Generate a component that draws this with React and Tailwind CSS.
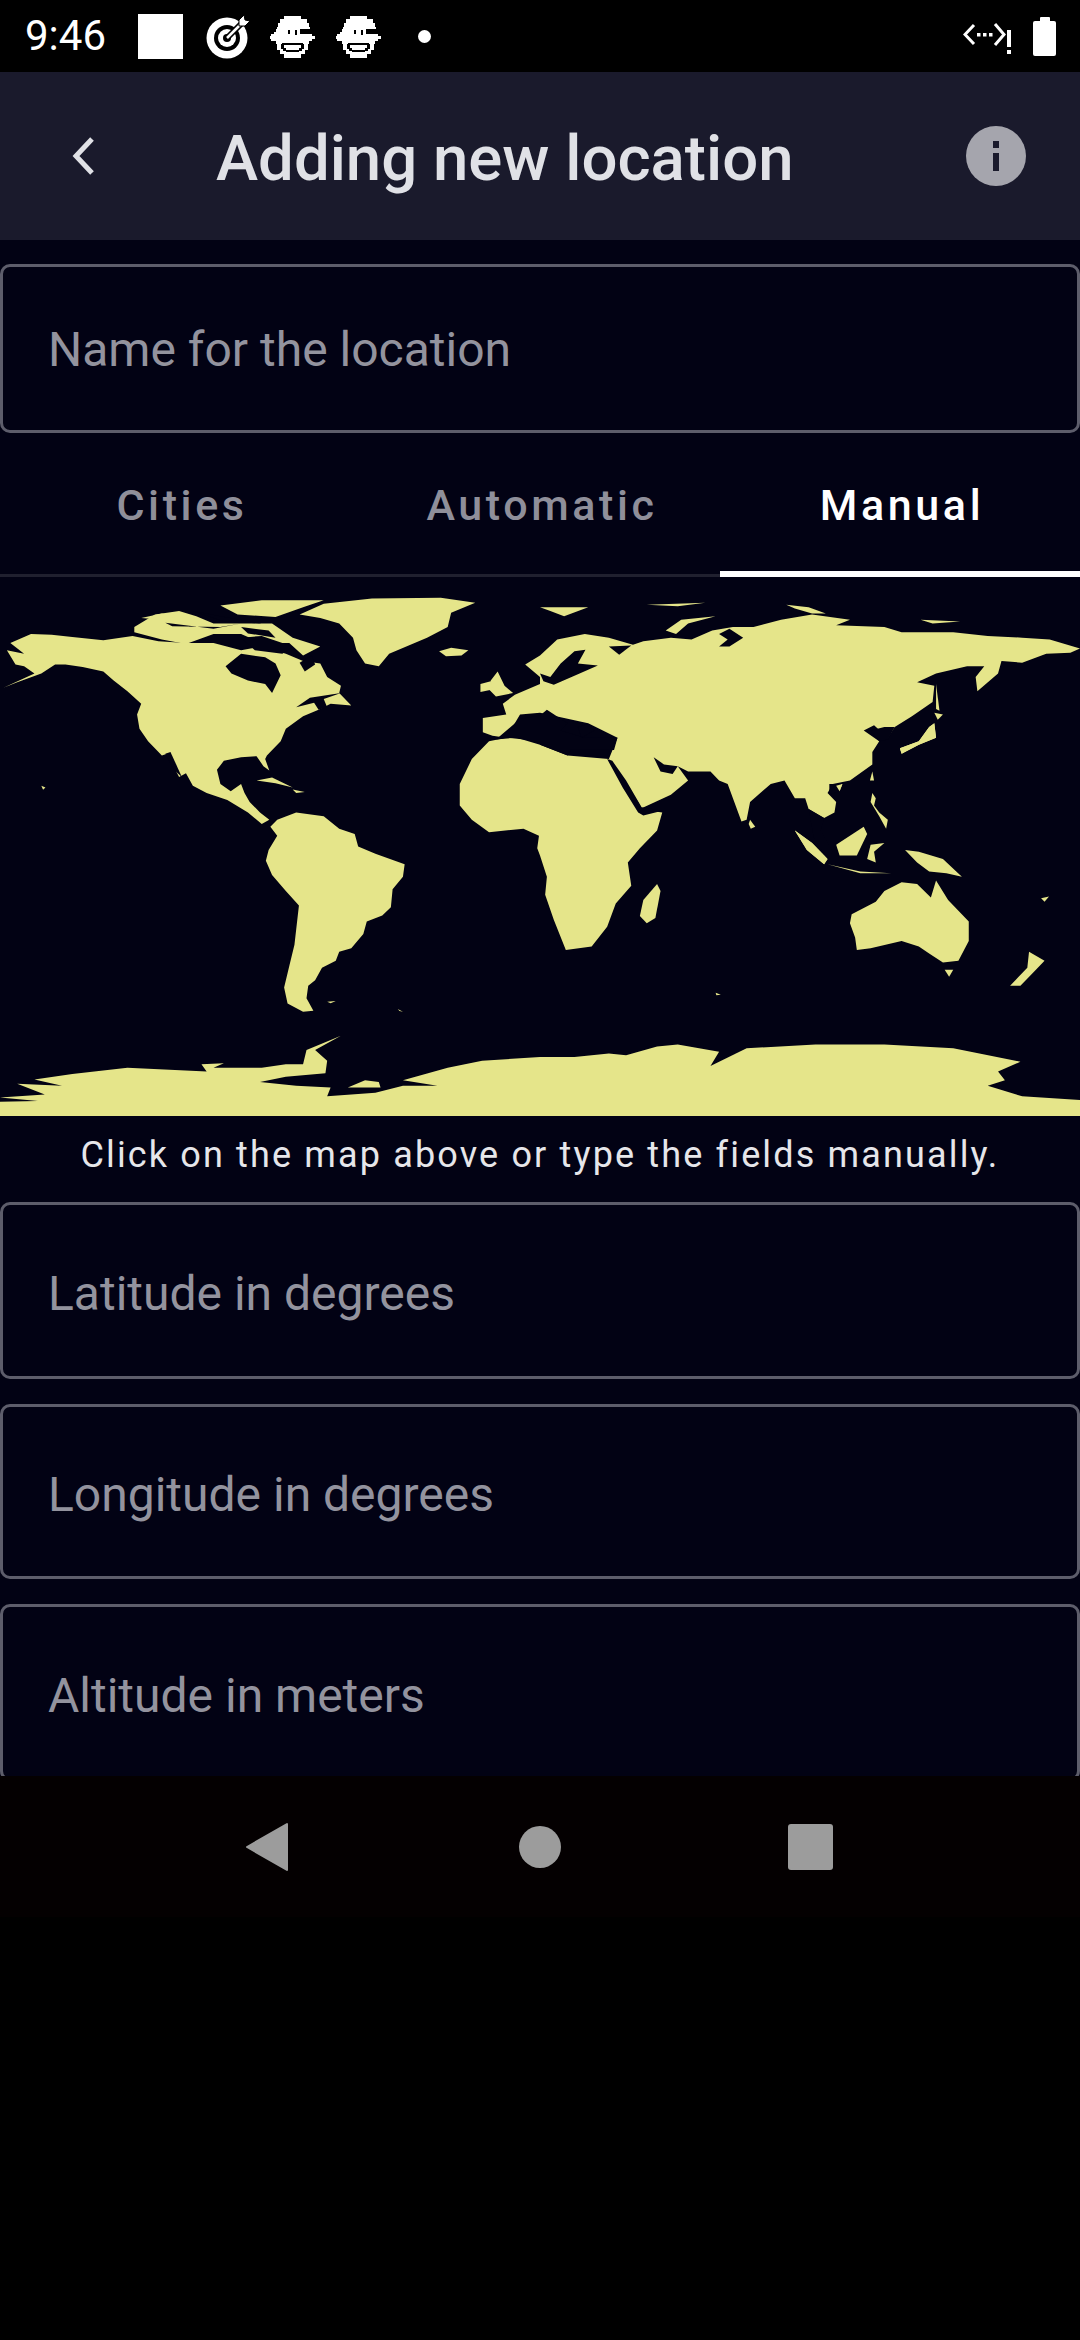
import React from "react";

const LAND = [
  // North America
  "30,205 90,180 150,182 210,188 300,197 385,185 460,200 540,205 620,205 700,225 760,215 830,235 880,255 930,262 950,300 990,325 985,345 1020,380 960,375 925,392 880,410 830,445 815,480 775,520 770,530 782,562 765,550 745,522 700,525 650,535 630,560 640,600 670,620 700,600 710,625 725,650 755,680 782,700 760,712 720,680 660,645 600,625 560,605 540,570 520,580 485,515 470,520 430,480 405,445 398,405 410,375 370,340 330,310 300,285 240,272 190,265 160,265 120,290 50,315 10,330 100,290 70,270 45,265 20,225 70,235",
  // Arctic islands
  "390,160 450,125 520,115 570,130 620,150 700,150 790,150 850,190 930,215 880,240 840,205 760,205 700,180 620,180 540,208 470,195 390,175",
  "640,100 760,85 940,85 880,105 800,132 690,125",
  "410,135 470,122 520,130 470,140",
  // Greenland, Iceland
  "870,125 940,95 1080,80 1280,78 1380,92 1310,120 1300,160 1240,190 1130,235 1100,270 1060,262 1035,225 1025,190 985,150 930,135",
  "1275,228 1310,218 1360,225 1340,240 1295,242",
  // South America
  "785,720 805,700 860,680 940,690 985,725 1030,740 1040,775 1090,795 1175,825 1170,860 1140,895 1135,945 1110,968 1065,985 1055,1020 1020,1060 985,1070 975,1095 935,1115 915,1150 895,1165 890,1200 910,1235 880,1238 835,1215 825,1170 840,1110 855,1050 868,940 830,900 790,855 772,815 780,785 805,745",
  // Caribbean
  "745,590 790,582 850,610 800,598",
  "850,615 885,622 860,625",
  // Africa
  "1335,600 1370,530 1420,480 1470,470 1568,480 | 0,490 80,520 200,530 240,590 285,670 355,680 340,730 290,780 255,820 265,885 220,935 195,1000 150,1055 75,1065 40,980 15,910 20,860 0,800 | 1560,780 1565,745 1520,725 1420,735 1370,700 1335,660",
  // Eurasia
  "1525,265 1568,240 | 50,195 130,180 200,190 270,210 300,200 380,190 440,195 500,170 560,160 620,160 700,140 790,125 900,140 860,155 1000,160 1050,175 1200,175 1300,185 1400,190 1480,195 1568,220 1540,232 1470,235 1400,260 1340,255 1330,290 1270,340 1265,300 1290,270 1240,270 1150,290 1095,315 1145,325 1140,370 1080,410 1030,440 1010,470 970,435 940,450 985,480 965,510 965,545 900,590 850,600 835,625 860,650 855,680 825,695 780,670 770,640 740,640 710,590 670,600 610,650 600,700 585,705 545,600 520,590 495,565 430,565 400,550 430,590 380,630 295,668 285,650 240,585 200,530 225,470 140,430 0,400 | 1510,405 1470,470 1430,465 1402,455 1402,415 1470,405 1460,375 1495,350 1568,320 1568,300",
  // UK, Ireland
  "1425,310 1445,285 1465,325 1490,345 1440,355 1420,335",
  "1395,320 1425,312 1430,335 1395,342",
  // Arctic Eurasia
  "| 0,105 140,105 70,130 30,115",
  "| 365,170 410,140 510,130 430,150 395,180",
  "| 310,98 480,92 400,102",
  "| 715,98 780,105 830,122 790,122 740,108",
  "| 1105,140 1220,145 1140,150",
  // SE Asia
  "| 740,730 790,765 835,810 825,825 775,785",
  "| 835,825 930,845 1020,850 930,850",
  "| 860,770 940,720 950,740 920,800 870,800",
  "| 960,770 1000,765 970,790 975,820 950,810",
  "| 965,625 975,640 970,660 985,680 1010,700 1005,725 985,690 960,650",
  "| 1060,785 1100,790 1170,810 1225,860 1180,850 1130,845 1095,820",
  "| 1045,500 1100,480 1130,440 1145,430 1150,470 1100,490 1050,515",
  "| 1145,400 1170,405 1155,420",
  "| 1150,320 1160,395 1150,390",
  "| 860,605 878,600 870,620",
  "| 965,565 970,590 958,590",
  "| 610,700 625,720 612,725 606,712",
  // Madagascar, Australia, Tasmania, NZ
  "| 340,880 350,900 335,975 310,990 290,970 300,925",
  "| 905,965 975,930 1000,900 1050,875 1095,880 1135,918 1150,870 1185,925 1245,985 1245,1040 1215,1095 1170,1100 1130,1075 1100,1055 1050,1040 960,1060 920,1065 915,1030 900,990",
  "| 1175,1120 1200,1120 1188,1140",
  "| 1420,1070 1465,1095 1440,1120 1395,1165 1365,1165 1415,1115",
  // Antarctica
  "0,1530 0,1490 110,1488 0,1478 130,1470 50,1440 180,1445 100,1428 210,1412 370,1395 600,1405 585,1385 650,1382 620,1395 760,1395 830,1385 880,1385 890,1345 990,1305 915,1345 950,1375 945,1410 830,1420 755,1435 860,1445 960,1450 950,1475 1090,1465 1170,1445 1270,1445 1170,1430 1300,1395 1400,1375 1568,1365 | 100,1365 200,1355 250,1360 340,1335 400,1330 520,1350 495,1390 600,1340 800,1330 1000,1330 1200,1340 1395,1378 1330,1405 1350,1430 1300,1445 1400,1475 1568,1485 1568,1530 | 1568,1530",
  "1010,1450 1060,1430 1100,1435 1105,1450",
  // Small islands
  "120,605 132,610 125,616",
  "950,1210 975,1208 960,1214",
  "1155,1230 1170,1238 1160,1236",
  "| 1455,920 1478,915 1465,930",
  "| 510,1185 525,1190 512,1192",
];

const SEA = [
  // Hudson Bay
  "655,270 700,235 770,245 800,262 815,295 790,345 770,320 720,310 672,290",
  "700,190 760,185 850,215 820,235 740,225",
  "870,260 905,240 915,265 885,285",
  // St Lawrence
  "860,385 900,358 990,345 940,362 950,385 925,392 912,372",
  // California
  "480,515 495,510 528,580 505,560",
  // Arctic channels
  "480,148 620,165 700,150 640,160 500,158",
  "560,115 640,130 760,150 650,145",
  "700,160 780,170 800,190 720,178",
  // Mediterranean
  "1440,475 1510,418 1568,408 | 20,392 80,430 60,450 130,470 225,470 215,505 90,503 80,520 0,490 | 1500,470",
  "| 110,440 140,432 158,450 120,470",
  // Baltic
  "| 60,262 100,228 132,224 110,262 168,268 115,290 40,322 10,312 0,290 30,300",
  "| 200,215 265,212 230,238",
  "| 520,180 550,165 590,190 550,215 520,215 545,195",
  // Red Sea, Gulf
  "| 195,530 210,535 250,590 295,665 355,675 300,688 285,680 240,610",
  "| 330,525 360,545 400,550 385,572 350,565",
  // SE Asia inlets
  "| 780,670 825,695 815,730 850,790 835,810 795,750",
  "| 840,600 875,600 870,620 840,630",
  "| 1000,440 1030,440 1010,475 985,480 960,450",
];

const TOP = [
  "| 860,605 878,600 870,620",
  "| 740,730 790,765 835,810 825,825 775,785",
  "| 1045,500 1100,480 1130,440 1145,430 1150,470 1100,490 1050,515",
];

function points(spec) {
  return spec
    .split("|")
    .map((part, i) => {
      const off = i % 2 === 1 ? 1568 : 0;
      return part
        .trim()
        .split(/\s+/)
        .filter(Boolean)
        .map((p) => {
          const [x, y] = p.split(",").map(Number);
          return `${x + off},${y}`;
        })
        .join(" ");
    })
    .join(" ");
}

function WorldMap() {
  return (
    <svg viewBox="0 20 3136 1510" preserveAspectRatio="none" className="block w-full h-[539px] shrink-0">
      {LAND.map((s, i) => (
        <polygon key={i} points={points(s)} fill="#e5e58a" />
      ))}
      {SEA.map((s, i) => (
        <polygon key={i} points={points(s)} fill="#020214" />
      ))}
      {TOP.map((s, i) => (
        <polygon key={i} points={points(s)} fill="#e5e58a" />
      ))}
    </svg>
  );
}

function Mascot() {
  return (
    <svg width="45" height="42" viewBox="0 0 45 42" shapeRendering="crispEdges" fill="#fff">
      <rect x="14" y="0" width="17" height="3" />
      <rect x="10" y="3" width="27" height="4" />
      <rect x="8" y="7" width="31" height="4" />
      <rect x="7" y="11" width="33" height="2" />
      <rect x="6" y="13" width="24" height="5" />
      <rect x="4" y="16" width="26" height="3" />
      <rect x="1" y="18" width="38" height="7" />
      <rect x="0" y="20" width="45" height="3" />
      <rect x="38" y="18" width="4" height="7" />
      <rect x="6" y="25" width="33" height="3" />
      <rect x="7" y="27" width="31" height="7" />
      <rect x="10" y="33" width="25" height="5" />
      <rect x="14" y="37" width="17" height="5" />
      <rect x="18" y="14" width="2" height="4" fill="#000" />
      <rect x="25" y="14" width="2" height="5" fill="#000" />
      <rect x="12" y="27" width="21" height="2" fill="#000" />
      <rect x="11" y="28" width="3" height="5" fill="#000" />
      <rect x="31" y="28" width="3" height="5" fill="#000" />
      <rect x="13" y="32" width="3" height="3" fill="#000" />
      <rect x="29" y="32" width="3" height="3" fill="#000" />
      <rect x="16" y="34" width="13" height="2" fill="#000" />
    </svg>
  );
}

function Target() {
  return (
    <svg width="44" height="44" viewBox="0 0 44 44">
      <circle cx="21" cy="23" r="20.5" fill="#fff" />
      <circle cx="21" cy="23" r="13" fill="#000" />
      <circle cx="21" cy="23" r="9" fill="#fff" />
      <circle cx="21" cy="23" r="4" fill="#000" />
      <path d="M21 23 L38 6" stroke="#000" strokeWidth="6" />
      <path d="M21 23 L38 6" stroke="#fff" strokeWidth="2.5" />
      <path d="M33 5 L38 0 L39 5 L44 6 L39 11 L33 11 Z" fill="#fff" stroke="#000" strokeWidth="1" />
    </svg>
  );
}

function NoInternet() {
  return (
    <svg width="50" height="32" viewBox="0 0 50 32" fill="none" stroke="#fff">
      <path d="M11 2 L2 11.500 L11 21" strokeWidth="3" />
      <path d="M32 1 L41 11.500 L32 22" strokeWidth="3" />
      <rect x="14" y="10" width="3.500" height="3.500" fill="#fff" stroke="none" />
      <rect x="20" y="10" width="3.500" height="3.500" fill="#fff" stroke="none" />
      <rect x="26" y="10" width="3.500" height="3.500" fill="#fff" stroke="none" />
      <rect x="44" y="7" width="4" height="17" fill="#fff" stroke="none" />
      <rect x="44" y="27" width="4" height="4" fill="#fff" stroke="none" />
    </svg>
  );
}

function Field({ label, className }) {
  return (
    <div className={`w-full shrink-0 flex items-center border-[3px] border-[#5d5d6b] rounded-[10px] pl-[45px] text-[48px] leading-none text-[#93939e] ${className}`}>
      {label}
    </div>
  );
}

function Tab({ label, active }) {
  return active ? (
    <div className="w-1/3 flex items-center justify-center pt-[7px] pl-[4px] border-b-[6px] border-white text-white text-[43px] font-medium tracking-[3.6px]">
      {label}
    </div>
  ) : (
    <div className="w-1/3 flex items-center justify-center pt-[4px] pl-[4px] border-b-[3px] border-[#20202f] text-[#8f8f9a] text-[43px] font-medium tracking-[3.6px]">
      {label}
    </div>
  );
}

export default function App() {
  return (
    <div className="w-[1080px] h-[2340px] bg-black flex flex-col overflow-hidden font-['Roboto',sans-serif]">
      <div className="h-[72px] shrink-0 bg-black flex items-center text-white">
        <span className="ml-[25px] w-[113px] text-[42px] leading-none">9:46</span>
        <div className="w-[45px] h-[45px] bg-white" />
        <div className="ml-[23px] mt-[2px]"><Target /></div>
        <div className="ml-[20px] mt-[2px]"><Mascot /></div>
        <div className="ml-[21px] mt-[2px]"><Mascot /></div>
        <div className="ml-[37px] w-[13px] h-[13px] rounded-full bg-white" />
        <div className="ml-auto mt-[6px]"><NoInternet /></div>
        <div className="ml-[20px] mr-[24px] w-[23px] h-[39px] flex flex-col items-center">
          <div className="w-[10px] h-[4px] bg-white rounded-t-[1px]" />
          <div className="w-full flex-1 bg-white rounded-[2px]" />
        </div>
      </div>

      <div className="h-[168px] shrink-0 bg-[#1a1a2c] flex items-center">
        <svg width="24" height="40" viewBox="0 0 24 40" fill="none" className="ml-[72px]">
          <path d="M20 3 L4 20 L20 37" stroke="#e0e1e6" strokeWidth="5" />
        </svg>
        <span className="ml-[120px] mt-[5px] text-[63.500px] leading-none font-medium text-[#e0e1e6]">Adding new location</span>
        <svg width="60" height="60" viewBox="0 0 60 60" className="ml-auto mr-[54px]">
          <circle cx="30" cy="30" r="30" fill="#a5a5ad" />
          <rect x="27" y="15" width="6" height="7" fill="#1a1a2c" />
          <rect x="27" y="27" width="6" height="18" fill="#1a1a2c" />
        </svg>
      </div>

      <div className="h-[1536px] shrink-0 bg-[#020214] flex flex-col overflow-hidden pt-[24px]">
        <Field label="Name for the location" className="h-[169px] pt-[3px]" />
        <div className="h-[144px] shrink-0 flex items-stretch">
          <Tab label="Cities" />
          <Tab label="Automatic" />
          <Tab label="Manual" active />
        </div>
        <WorldMap />
        <div className="h-[86px] shrink-0 flex items-center justify-center pb-[8px] text-[36px] tracking-[2.150px] text-[#e6e6ea]">
          Click on the map above or type the fields manually.
        </div>
        <div className="flex flex-col shrink-0 gap-[25px]">
          <Field label="Latitude in degrees" className="h-[177px] pt-[6px]" />
          <Field label="Longitude in degrees" className="h-[175px] pt-[6px]" />
          <Field label="Altitude in meters" className="h-[177px] pt-[6px]" />
        </div>
      </div>

      <div className="h-[141px] shrink-0 bg-[#040001] flex items-center">
        <svg width="44" height="50" viewBox="0 0 44 50" className="ml-[245px]">
          <path d="M42 2 L42 48 L2 25 Z" fill="#9c9c9c" stroke="#9c9c9c" strokeWidth="2" strokeLinejoin="round" />
        </svg>
        <div className="ml-[230px] w-[42px] h-[42px] rounded-full bg-[#9c9c9c]" />
        <div className="ml-[227px] w-[45px] h-[46px] rounded-[3px] bg-[#9c9c9c]" />
      </div>
    </div>
  );
}
